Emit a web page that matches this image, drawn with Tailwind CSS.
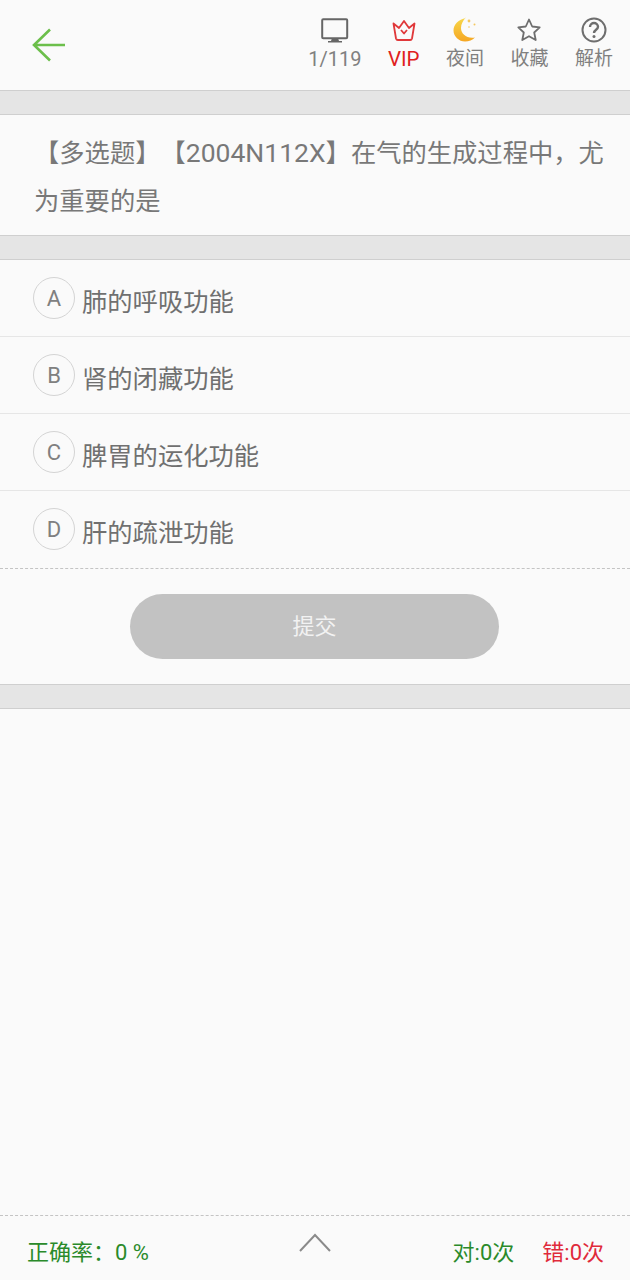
<!DOCTYPE html>
<html>
  <head>
    <meta charset="utf-8" />
    <title>Question</title>
    <script src="https://cdn.jsdelivr.net/npm/@tailwindcss/browser@4"></script>
  </head>
  <body class="bg-[#fafafa]">
    <div class="w-[630px] h-[1280px] flex flex-col overflow-hidden bg-[#fafafa] text-[#808080] [text-spacing-trim:space-all] font-['Roboto','Noto_Sans_CJK_SC',sans-serif]">
      <!-- top bar -->
      <div class="h-[90px] shrink-0 flex justify-between items-start">
        <svg class="ml-[32px] mt-[28px]" width="34" height="34" viewBox="0 0 34 34" fill="none" stroke="#6cbf4b" stroke-width="2.6">
          <path d="M18 1.500 2 17l16 15.500M2 17h31" />
        </svg>
        <div class="flex gap-[26.5px] pr-[17px] pt-[17px] text-[19px] leading-[24px] text-[#808080]">
          <div class="flex flex-col items-center">
            <svg class="h-[26px] mb-[4px]" width="28" height="26" viewBox="0 0 28 26" fill="none">
              <rect x="1.200" y="2.200" width="25" height="19" rx="1" stroke="#666" stroke-width="2" />
              <path d="M11 21h6l1 3h3v1.500H7V24h3z" fill="#666" />
            </svg>
            <span class="text-[20px]">1/119</span>
          </div>
          <div class="flex flex-col items-center text-[#e02020]">
            <svg class="h-[26px] mb-[4px]" width="26" height="26" viewBox="0 0 26 26" fill="none" stroke="#e0383a" stroke-width="1.800" stroke-linejoin="round">
              <path d="M2.500 6.500 8 11l5-7 5 7 5.500-4.500-2.500 15a2 2 0 0 1-2 1.500H7a2 2 0 0 1-2-1.500z" />
              <path d="m10 13 3 3.500 3-3.500" />
            </svg>
            <span class="text-[20.500px]">VIP</span>
          </div>
          <div class="flex flex-col items-center">
            <svg class="h-[26px] mb-[4px]" width="26" height="26" viewBox="0 0 26 26">
              <defs>
                <linearGradient id="moon" x1="0" y1="0" x2="0" y2="1">
                  <stop offset="0" stop-color="#f7d84a" />
                  <stop offset="1" stop-color="#f5a623" />
                </linearGradient>
              </defs>
              <path d="M14 1C6.500 2.500 1.500 7.500 1.500 13.500c0 6 5.500 11 11.500 11 4 0 7.500-1.500 10-4-8 1.500-14-3.500-14-9.500 0-4 2-7.500 5-10.500z" fill="url(#moon)" />
              <circle cx="17" cy="4" r="1.400" fill="#f5c860" />
              <circle cx="22.500" cy="7.500" r="1" fill="#f5c860" />
              <circle cx="17" cy="10" r="0.800" fill="#f5c860" />
            </svg>
            <span>夜间</span>
          </div>
          <div class="flex flex-col items-center">
            <svg class="h-[26px] mb-[4px]" width="26" height="26" viewBox="0 0 26 26" fill="none" stroke="#6e6e6e" stroke-width="1.800" stroke-linejoin="round">
              <path d="m13 2.500 3.200 7 7.500.9-5.500 5.100 1.500 7.500-6.700-3.800-6.700 3.800 1.500-7.500-5.500-5.100 7.500-.9z" />
            </svg>
            <span>收藏</span>
          </div>
          <div class="flex flex-col items-center">
            <svg class="h-[26px] mb-[4px]" width="26" height="26" viewBox="0 0 26 26" fill="none" stroke="#6e6e6e" stroke-width="2">
              <circle cx="13" cy="13" r="11.500" />
              <path d="M9 10c0-2.500 2-4 4-4s4 1.500 4 3.800c0 3-4 3-4 6.200" stroke-width="2.400" />
              <circle cx="13" cy="19.500" r="1.500" fill="#6e6e6e" stroke="none" />
            </svg>
            <span>解析</span>
          </div>
        </div>
      </div>
      <div class="h-[25px] shrink-0 bg-[#e5e5e5] border-y border-[#cfcfcf]"></div>

      <!-- question -->
      <div class="h-[120px] shrink-0 pl-[34px] pr-[20px] pt-[14px] text-[25.300px] leading-[48px] text-[#787878]">
        【多选题】【<span class="text-[26.500px]">2004N112X</span>】在气的生成过程中，尤<br />为重要的是
      </div>
      <div class="h-[25px] shrink-0 bg-[#e5e5e5] border-y border-[#cfcfcf]"></div>

      <!-- options -->
      <div class="flex flex-col">
        <div class="h-[77px] flex pl-[33px] pt-[17px] border-b border-[#e6e6e6]">
          <span class="w-[42px] h-[42px] rounded-full border border-[#d4d4d4] flex items-center justify-center text-[22px]">A</span>
          <span class="ml-[7px] mt-[6px] text-[25.300px] leading-[40px] text-[#707070]">肺的呼吸功能</span>
        </div>
        <div class="h-[77px] flex pl-[33px] pt-[17px] border-b border-[#e6e6e6]">
          <span class="w-[42px] h-[42px] rounded-full border border-[#d4d4d4] flex items-center justify-center text-[22px]">B</span>
          <span class="ml-[7px] mt-[6px] text-[25.300px] leading-[40px] text-[#707070]">肾的闭藏功能</span>
        </div>
        <div class="h-[77px] flex pl-[33px] pt-[17px] border-b border-[#e6e6e6]">
          <span class="w-[42px] h-[42px] rounded-full border border-[#d4d4d4] flex items-center justify-center text-[22px]">C</span>
          <span class="ml-[7px] mt-[6px] text-[25.300px] leading-[40px] text-[#707070]">脾胃的运化功能</span>
        </div>
        <div class="h-[78px] flex pl-[33px] pt-[17px] border-b border-dashed border-[#c4c4c4]">
          <span class="w-[42px] h-[42px] rounded-full border border-[#d4d4d4] flex items-center justify-center text-[22px]">D</span>
          <span class="ml-[7px] mt-[6px] text-[25.300px] leading-[40px] text-[#707070]">肝的疏泄功能</span>
        </div>
      </div>

      <!-- submit -->
      <div class="h-[115px] shrink-0 pt-[25px] pl-[130px]">
        <button class="w-[369px] h-[65px] rounded-full bg-[#c2c2c2] text-[#f2f2f2] text-[22px]">提交</button>
      </div>
      <div class="h-[25px] shrink-0 bg-[#e5e5e5] border-y border-[#cfcfcf]"></div>

      <div class="flex-1"></div>

      <!-- footer -->
      <div class="h-[65px] shrink-0 border-t border-dashed border-[#c4c4c4] flex items-start pl-[27px] pr-[26px] text-[22px] leading-[28px]">
        <span class="mt-[23px] w-[271px] text-[#2a8a2a]">正确率：0 %</span>
        <svg class="mt-[17px]" width="34" height="20" viewBox="0 0 34 20" fill="none" stroke="#8a8a8a" stroke-width="2">
          <path d="M2 18 17 2l15 16" />
        </svg>
        <div class="mt-[23px] ml-auto flex gap-[28px]">
          <span class="text-[#2a8a2a]">对:0次</span>
          <span class="text-[#e02a3a]">错:0次</span>
        </div>
      </div>
    </div>
  </body>
</html>
